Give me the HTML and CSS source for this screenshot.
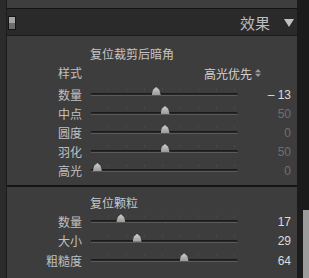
FILE: index.html
```html
<!DOCTYPE html>
<html lang="zh-CN">
<head>
    <meta charset="UTF-8">
    <title>效果</title>
    <link rel="stylesheet" href="styles.css">
</head>
<body>
    <div class="app">
        <div class="gutter"></div>

        <div class="column">
            <div class="top-panel"></div>

            <div class="header">
                <span class="toggle"></span>
                <span class="header-title">效果</span>
                <span class="header-arrow"></span>
            </div>

            <!-- 裁剪后暗角 -->
            <div class="panel panel-vignette">
                <div class="panel-title">复位裁剪后暗角</div>

                <div class="row row-style">
                    <span class="label">样式</span>
                    <span class="select">高光优先
                        <svg class="updown" width="6" height="8" viewBox="0 0 6 8">
                            <path d="M0 3.2 L3 0 L6 3.2 Z M0 4.8 L3 8 L6 4.8 Z" fill="#9a9a9a"/>
                        </svg>
                    </span>
                </div>

                <div class="row">
                    <span class="label">数量</span>
                    <div class="track"><span class="thumb" style="left: 44%"></span></div>
                    <span class="value">&ndash;&nbsp;13</span>
                </div>
                <div class="row">
                    <span class="label">中点</span>
                    <div class="track"><span class="thumb" style="left: 50%"></span></div>
                    <span class="value dim">50</span>
                </div>
                <div class="row">
                    <span class="label">圆度</span>
                    <div class="track"><span class="thumb" style="left: 50%"></span></div>
                    <span class="value dim">0</span>
                </div>
                <div class="row">
                    <span class="label">羽化</span>
                    <div class="track"><span class="thumb" style="left: 50%"></span></div>
                    <span class="value dim">50</span>
                </div>
                <div class="row">
                    <span class="label">高光</span>
                    <div class="track"><span class="thumb" style="left: 4%"></span></div>
                    <span class="value dim">0</span>
                </div>
            </div>

            <!-- 颗粒 -->
            <div class="panel panel-grain">
                <div class="panel-title">复位颗粒</div>

                <div class="row">
                    <span class="label">数量</span>
                    <div class="track"><span class="thumb" style="left: 20%"></span></div>
                    <span class="value">17</span>
                </div>
                <div class="row">
                    <span class="label">大小</span>
                    <div class="track"><span class="thumb" style="left: 31%"></span></div>
                    <span class="value">29</span>
                </div>
                <div class="row">
                    <span class="label">粗糙度</span>
                    <div class="track"><span class="thumb" style="left: 63%"></span></div>
                    <span class="value">64</span>
                </div>
            </div>
        </div>

        <div class="side">
            <div class="scrollbar"></div>
        </div>
    </div>
</body>
</html>
```

FILE: styles.css
```css
body {
    margin: 0;
    width: 309px;
    height: 278px;
    overflow: hidden;
    background-color: #262626;
    font-family: "Noto Sans CJK SC", "Liberation Sans", sans-serif;
    color: #c4c4c4;
}

.app {
    display: flex;
    height: 278px;
}

.gutter {
    width: 7px;
    background-color: #2b2b2b;
    border-right: 1px solid #1c1c1c;
    box-sizing: border-box;
}

.column {
    width: 290px;
    display: flex;
    flex-direction: column;
}

.side {
    flex: 1;
    display: flex;
    flex-direction: column;
    justify-content: flex-end;
    align-items: flex-end;
    background-color: #1b1b1b;
}

.scrollbar {
    width: 6px;
    height: 68px;
    background-color: #9c9c9c;
}

.top-panel {
    height: 8px;
    background-color: #3e3e3e;
    border-bottom: 1px solid #151515;
}

.header {
    height: 27px;
    display: flex;
    align-items: center;
    background-color: #2a2a2a;
    border-bottom: 1px solid #1a1a1a;
    padding: 2px 2px 0 1px;
    box-sizing: border-box;
}

.toggle {
    width: 8px;
    height: 14px;
    box-sizing: border-box;
    border: 1px solid #151515;
    background: linear-gradient(#a4a4a4 0 50%, #6c6c6c 50% 100%);
}

.header-title {
    margin-left: auto;
    font-size: 15px;
    line-height: 18px;
    color: #bdbdbd;
}

.header-arrow {
    width: 0;
    height: 0;
    margin: 0 1px 0 14px;
    border-left: 5px solid transparent;
    border-right: 5px solid transparent;
    border-top: 8px solid #c2c2c2;
}

.panel {
    background-color: #3d3d3d;
    box-sizing: border-box;
}

.panel-vignette {
    height: 151px;
    padding-top: 10px;
    border-bottom: 2px solid #151515;
}

.panel-grain {
    flex: 1;
    padding-top: 8px;
}

.panel-title {
    padding-left: 83px;
    font-size: 12px;
    line-height: 16px;
    color: #c6c6c6;
}

.row {
    display: grid;
    grid-template-columns: 75px 147px 44px;
    column-gap: 9px;
    align-items: center;
    height: 19px;
}

.panel-grain .row {
    height: 19.5px;
}

.panel-grain .panel-title {
    margin-bottom: 1px;
}

.row-style {
    height: 22px;
    margin-bottom: 1px;
}

.label {
    text-align: right;
    font-size: 12px;
    line-height: 16px;
    color: #c0c0c0;
}

.select {
    grid-column: 2 / 4;
    justify-self: end;
    margin-right: 30px;
    font-size: 12px;
    color: #d2d2d2;
    display: flex;
    align-items: center;
    gap: 3px;
}

.track {
    position: relative;
    height: 3px;
    border-radius: 0 2px 2px 0;
    background: linear-gradient(#1c1c1c 0 1px, #262626 1px 2px, #5a5a5a 2px 3px);
}

.track::before {
    content: "";
    position: absolute;
    left: 0;
    right: 0;
    top: -5px;
    height: 3px;
    background: repeating-linear-gradient(90deg, transparent 0 17px, #474747 17px 18px);
}

.thumb {
    position: absolute;
    top: -6px;
    width: 9px;
    height: 8px;
    margin-left: -4px;
    clip-path: polygon(50% 0, 85% 35%, 100% 100%, 0 100%, 15% 35%);
    background: linear-gradient(#d0d0d0, #9a9a9a);
}

.value {
    text-align: right;
    font-family: "Liberation Sans", sans-serif;
    font-size: 12px;
    color: #dcdcdc;
}

.value.dim {
    color: #6f6f6f;
}
```
